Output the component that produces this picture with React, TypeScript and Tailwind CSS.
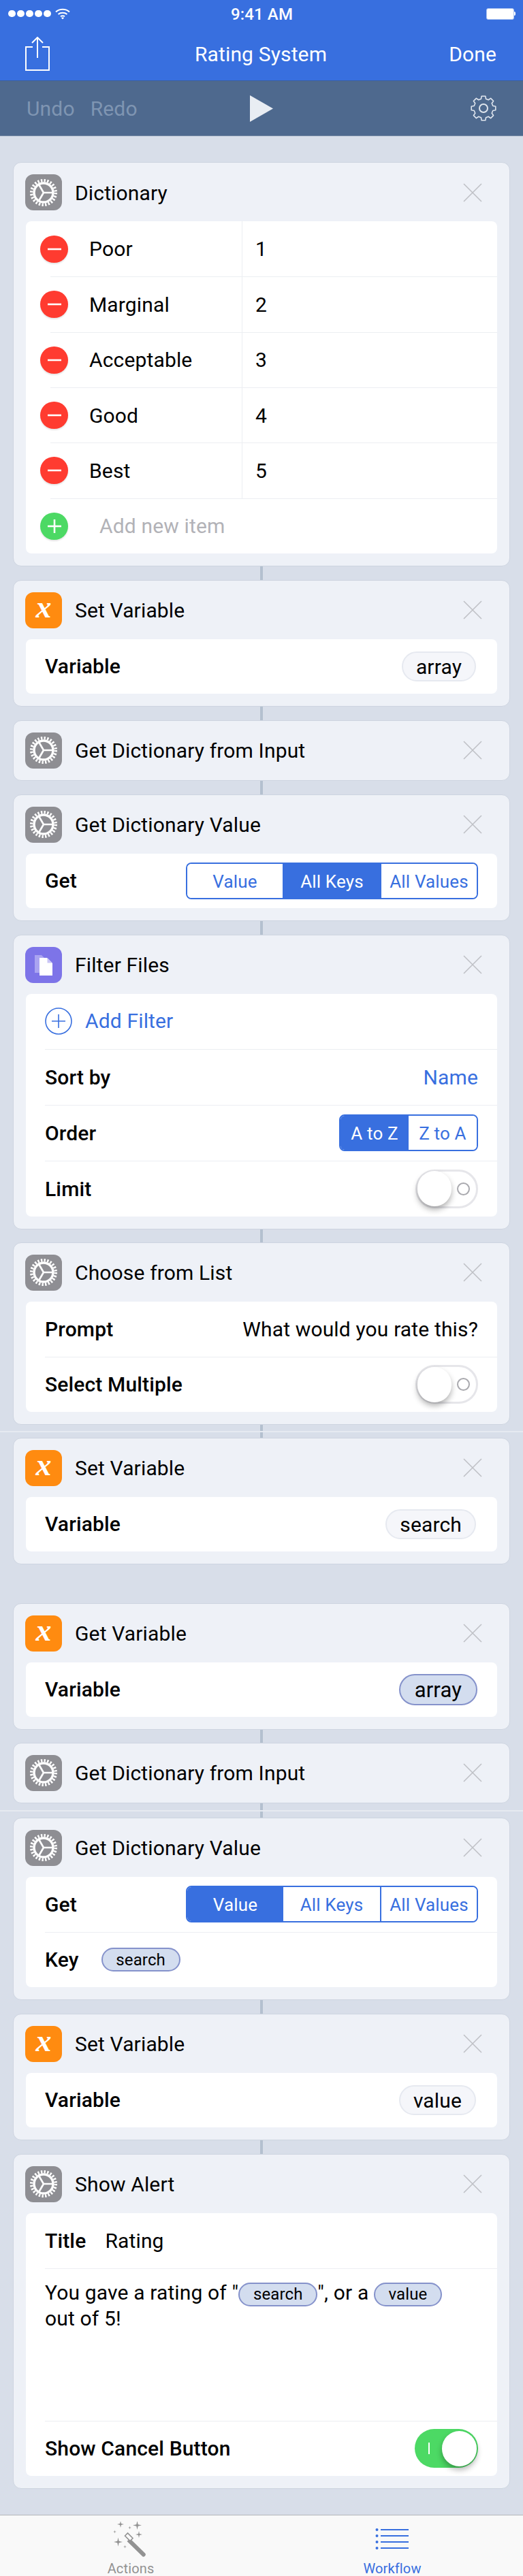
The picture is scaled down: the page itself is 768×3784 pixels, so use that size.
import { ReactNode } from "react";
import clsx from "clsx";

function cogPoints(teeth: number, outer: number, inner: number, c: number) {
  const pts: string[] = [];
  const step = (Math.PI * 2) / teeth;
  for (let i = 0; i < teeth; i++) {
    const a = i * step - Math.PI / 2;
    const at = (r: number, d: number) =>
      `${(c + r * Math.cos(a + d * step)).toFixed(2)},${(c + r * Math.sin(a + d * step)).toFixed(2)}`;
    pts.push(at(inner, -0.32), at(outer, -0.2), at(outer, 0.2), at(inner, 0.32));
  }
  return pts.join(" ");
}

function GearIcon() {
  return (
    <div className="flex h-[53px] w-[54px] shrink-0 items-center justify-center rounded-[12px] bg-[#8e8e93]">
      <svg width="44" height="44" viewBox="0 0 44 44" fill="none" stroke="white">
        <circle cx="22" cy="22" r="17.8" strokeWidth="4.4" strokeDasharray="2.4 2.26" />
        <circle cx="22" cy="22" r="14" strokeWidth="3.4" />
        <path d="M22 22 L36 22 M22 22 L15 10 M22 22 L15 34" strokeWidth="2.6" />
      </svg>
    </div>
  );
}

function VariableIcon() {
  return (
    <div className="flex h-[53px] w-[54px] shrink-0 items-center justify-center rounded-[12px] bg-[#ff8b10] pb-[8px] font-['Liberation_Serif',serif] text-[46px] font-bold italic leading-none text-white">
      x
    </div>
  );
}

function FilesIcon() {
  return (
    <div className="flex h-[53px] w-[54px] shrink-0 items-center justify-center rounded-[12px] bg-[#7d74e8]">
      <svg width="54" height="53" viewBox="0 0 54 53">
        <path d="M14 12 H24 L28 16 V38 H14 Z" fill="#aaa4f1" />
        <path d="M21 16 H32 L40 24 V42 H21 Z" fill="white" />
        <path d="M32.5 16 L40 23.5 H32.5 Z" fill="#c9c5f6" />
      </svg>
    </div>
  );
}

function Card(props: { icon: ReactNode; title: string; children?: ReactNode }) {
  return (
    <div
      className={clsx(
        "rounded-[12px] border border-[#cdd4e0] bg-[#eef1f7] px-[18px] pt-[17px]",
        props.children ? "pb-[18px]" : "pb-[17px]"
      )}
    >
      <div className="-mx-px flex h-[53px] items-center">
        {props.icon}
        <div className="ml-[19px] flex-1 pt-[2px] text-[30px] leading-[36px] text-black">{props.title}</div>
        <svg width="28" height="28" viewBox="0 0 28 28" className="mr-[23px]" stroke="#bfc1c6" strokeWidth="1.6">
          <path d="M1 1 L27 27 M27 1 L1 27" />
        </svg>
      </div>
      {props.children && <div className="mt-[16px] rounded-[8px] bg-white">{props.children}</div>}
    </div>
  );
}

function Row(props: { first?: boolean; className?: string; children: ReactNode }) {
  return (
    <div
      className={clsx(
        "ml-[28px] flex items-center justify-between pr-[28px]",
        !props.first && "border-t border-[#eceef2]",
        props.className ?? "h-[81px]"
      )}
    >
      {props.children}
    </div>
  );
}

function Label(props: { children: ReactNode }) {
  return <div className="pt-[1px] text-[30px] font-medium leading-[36px] text-black">{props.children}</div>;
}

function Pill(props: { children: ReactNode }) {
  return (
    <div className="mr-[3px] flex h-[44px] items-center rounded-full border-2 border-[#e6e9f0] bg-[#f5f6fa] px-[19px] pt-[2px] text-[30px] leading-none text-black">
      {props.children}
    </div>
  );
}

function InlinePill(props: { children: ReactNode; className?: string }) {
  return (
    <span
      className={clsx(
        "inline-flex h-[35px] items-center justify-center rounded-full border-2 border-[#8592cb] bg-[#d3ddef] align-middle text-[24px] leading-none text-black",
        props.className
      )}
    >
      {props.children}
    </span>
  );
}

function Segmented(props: { options: string[]; active: number; grid: string }) {
  return (
    <div
      className={clsx(
        "grid h-[54px] overflow-hidden rounded-[8px] border-2 border-[#386fdf] text-[26px] leading-none",
        props.grid
      )}
    >
      {props.options.map((o, i) => (
        <div
          key={o}
          className={clsx(
            "flex items-center justify-center pt-[2px]",
            i === props.active ? "bg-[#386fdf] text-white" : "bg-white text-[#386fdf]",
            i < props.options.length - 1 && i !== props.active && i + 1 !== props.active && "border-r-2 border-[#386fdf]"
          )}
        >
          {o}
        </div>
      ))}
    </div>
  );
}

function Toggle(props: { on?: boolean }) {
  if (props.on) {
    return (
      <div className="flex h-[57px] w-[93px] items-center justify-between rounded-full bg-[#4cd964] pl-[20px] pr-[2px]">
        <div className="h-[17px] w-[2px] bg-white" />
        <div className="h-[52px] w-[51px] rounded-full bg-white shadow-[0_5px_8px_rgba(0,0,0,0.3)]" />
      </div>
    );
  }
  return (
    <div className="flex h-[57px] w-[92px] items-center justify-between rounded-full border-[3px] border-[#e6e6ea] bg-white pr-[9px]">
      <div className="h-[52px] w-[50px] rounded-full bg-white shadow-[0_5px_8px_rgba(0,0,0,0.3)]" />
      <div className="h-[19px] w-[19px] rounded-full border-2 border-[#a9a9ae]" />
    </div>
  );
}

function Connector(props: { className: string; seam?: string }) {
  return (
    <div className={clsx("relative flex justify-center", props.className)}>
      <div className="h-full w-[4px] bg-[#b4c0cf]" />
      {props.seam && <div className={clsx("absolute left-[-19px] h-[2px] w-[768px] bg-[#e6eaf1]", props.seam)} />}
    </div>
  );
}

function RoundButton(props: { plus?: boolean }) {
  return (
    <div
      className={clsx(
        "flex h-[40px] w-[41px] shrink-0 items-center justify-center rounded-full shadow-[0_2px_2px_rgba(0,0,0,0.1)]",
        props.plus ? "bg-[#4cd964]" : "bg-[#ff3b30]"
      )}
    >
      <svg width="22" height="22" viewBox="0 0 22 22" stroke="white" strokeWidth="2.6">
        <path d="M1 11 H21" />
        {props.plus && <path d="M11 1 V21" />}
      </svg>
    </div>
  );
}

const entries = [
  ["Poor", "1"],
  ["Marginal", "2"],
  ["Acceptable", "3"],
  ["Good", "4"],
  ["Best", "5"],
];

function StatusBar() {
  return (
    <div className="grid h-[40px] grid-cols-[1fr_auto_1fr] items-center pl-[12px] pr-[11px] text-white">
      <div className="flex items-center gap-[2.5px]">
        {[0, 1, 2, 3, 4].map((i) => (
          <div key={i} className="h-[10.5px] w-[10.5px] rounded-full bg-white" />
        ))}
        <svg width="22" height="17" viewBox="0 0 22 17" fill="none" stroke="white" strokeWidth="2" className="ml-[4px]">
          <path d="M1 5.5 C6.5 0.5 15.5 0.5 21 5.5" />
          <path d="M4.5 9 C8 6 14 6 17.5 9" />
          <path d="M8 12.2 C9.5 11 12.5 11 14 12.2" />
          <path d="M9.5 14 L11 16 L12.5 14 Z" fill="white" strokeWidth="1" />
        </svg>
      </div>
      <div className="pt-[2px] text-[24px] font-medium leading-none">9:41 AM</div>
      <div className="flex items-center justify-end">
        <div className="h-[17px] w-[41px] rounded-[3px] border border-[#a9c2f0] bg-white" />
        <div className="h-[6px] w-[2px] rounded-r-sm bg-white" />
      </div>
    </div>
  );
}

function NavBar() {
  return (
    <div className="grid h-[78px] grid-cols-[1fr_auto_1fr] items-center pl-[37px] pr-[39px] text-[30px] leading-none text-white">
      <svg width="36" height="50" viewBox="0 0 36 50" fill="none" stroke="white" strokeWidth="2">
        <path d="M11 15 H1 V49 H35 V15 H25" />
        <path d="M18 31 V1 M10 9 L18 1 L26 9" />
      </svg>
      <div className="pt-[2px]">Rating System</div>
      <div className="pt-[2px] text-right">Done</div>
    </div>
  );
}

function ToolBar() {
  return (
    <div className="grid h-[82px] grid-cols-[1fr_auto_1fr] items-center border-y border-t-[#3c5f9f] border-b-[#7488a3] bg-[#4e698e] pl-[39px] pr-[39px] text-[30px] leading-none text-[#7f95b2]">
      <div className="flex gap-[23px] pt-[2px]">
        <span>Undo</span>
        <span>Redo</span>
      </div>
      <svg width="34" height="39" viewBox="0 0 34 39">
        <path d="M0 0 L34 19.5 L0 39 Z" fill="#e9edf3" />
      </svg>
      <svg width="38" height="38" viewBox="0 0 38 38" fill="none" stroke="#dfe5ee" strokeWidth="1.6" className="justify-self-end">
        <polygon points={cogPoints(8, 18, 14.2, 19)} strokeLinejoin="round" />
        <circle cx="19" cy="19" r="6" strokeWidth="2" />
      </svg>
    </div>
  );
}

function TabBar() {
  const star = (x: number, y: number, r: number) =>
    `M${x} ${y - r} L${x + r * 0.18} ${y - r * 0.18} L${x + r} ${y} L${x + r * 0.18} ${y + r * 0.18} L${x} ${y + r} L${x - r * 0.18} ${y + r * 0.18} L${x - r} ${y} L${x - r * 0.18} ${y - r * 0.18} Z`;
  return (
    <div className="grid h-[91px] grid-cols-2 border-t border-[#b4b6ba] bg-[#f9f9f9] pt-[9px] text-[20px] leading-[24px]">
      <div className="flex flex-col items-center text-[#929292]">
        <svg width="52" height="52" viewBox="0 0 52 52" fill="#929292">
          <path d={star(35.5, 5.5, 6.5)} />
          <path d={star(11, 4, 5)} />
          <path d={star(38, 19, 5)} />
          <path d={star(7.5, 30, 6.5)} />
          <path d={star(24.5, 9, 2.5)} />
          <path d={star(2.5, 15, 2.5)} />
          <path d={star(17.5, 37, 2.5)} />
          <path d="M25 25 L47 46.5 A3 3 0 0 1 42.5 50.5 L20.5 29 Z" />
          <path d="M17.5 21 L21.5 17 L29 24.5 L25 28.5 Z" fill="#f9f9f9" stroke="#929292" strokeWidth="1.6" />
        </svg>
        <div className="mt-[5px]">Actions</div>
      </div>
      <div className="flex flex-col items-center text-[#386fdf]">
        <svg width="52" height="52" viewBox="0 0 52 52" fill="#386fdf">
          <circle cx="3.5" cy="12" r="2" />
          <circle cx="3.5" cy="21" r="2" />
          <circle cx="3.5" cy="30" r="2" />
          <circle cx="3.5" cy="39" r="2" />
          <rect x="9" y="11" width="41" height="2" />
          <rect x="9" y="20" width="41" height="2" />
          <rect x="9" y="29" width="41" height="2" />
          <rect x="9" y="38" width="41" height="2" />
        </svg>
        <div className="mt-[5px]">Workflow</div>
      </div>
    </div>
  );
}

export default function App() {
  return (
    <div className="flex min-h-[3784px] w-[768px] flex-col overflow-hidden bg-[#d8dee9] font-[Roboto,sans-serif] tracking-[0.15px]">
      <div className="bg-[#386fdf]">
        <StatusBar />
        <NavBar />
      </div>
      <ToolBar />

      <div className="flex-1 px-[19px] pb-[38px] pt-[38px]">
        <Card icon={<GearIcon />} title="Dictionary">
          {entries.map(([k, v], i) => (
            <div key={k} className={clsx("ml-[36px] flex h-[81.33px] items-center text-[30px] leading-[36px] text-black", i > 0 && "border-t border-[#eceef2]")}>
              <div className="flex h-full w-[282px] items-center border-r border-[#eceef2]">
                <div className="-ml-[15px]">
                  <RoundButton />
                </div>
                <div className="ml-[31px] pt-[1px]">{k}</div>
              </div>
              <div className="pl-[19px] pt-[1px]">{v}</div>
            </div>
          ))}
          <div className="ml-[36px] flex h-[81.33px] items-center border-t border-[#eceef2] text-[30px] leading-[36px] text-[#b2b2b7]">
            <div className="-ml-[15px]">
              <RoundButton plus />
            </div>
            <div className="ml-[46px] pt-[1px]">Add new item</div>
          </div>
        </Card>
        <Connector className="h-[20px]" />

        <Card icon={<VariableIcon />} title="Set Variable">
          <Row first className="h-[80px]">
            <Label>Variable</Label>
            <Pill>array</Pill>
          </Row>
        </Card>
        <Connector className="h-[20px]" />

        <Card icon={<GearIcon />} title="Get Dictionary from Input" />
        <Connector className="h-[20px]" />

        <Card icon={<GearIcon />} title="Get Dictionary Value">
          <Row first className="h-[80px]">
            <Label>Get</Label>
            <Segmented options={["Value", "All Keys", "All Values"]} active={1} grid="w-[429px] grid-cols-[140px_145px_1fr]" />
          </Row>
        </Card>
        <Connector className="h-[20px]" />

        <Card icon={<FilesIcon />} title="Filter Files">
          <Row first>
            <div className="flex items-center text-[30px] leading-[36px] text-[#386fdf]">
              <svg width="40" height="40" viewBox="0 0 40 40" fill="none" stroke="#386fdf" strokeWidth="1.6">
                <circle cx="20" cy="20" r="19" />
                <path d="M20 10 V30 M10 20 H30" />
              </svg>
              <span className="ml-[19px]">Add Filter</span>
            </div>
          </Row>
          <Row className="h-[82px]">
            <Label>Sort by</Label>
            <div className="pt-[1px] text-[30px] leading-[36px] text-[#386fdf]">Name</div>
          </Row>
          <Row className="h-[82px]">
            <Label>Order</Label>
            <Segmented options={["A to Z", "Z to A"]} active={0} grid="w-[204px] grid-cols-2" />
          </Row>
          <Row className="h-[82px]">
            <Label>Limit</Label>
            <Toggle />
          </Row>
        </Card>
        <Connector className="h-[19px]" />

        <Card icon={<GearIcon />} title="Choose from List">
          <Row first>
            <Label>Prompt</Label>
            <div className="pt-[1px] text-[30px] leading-[36px] text-black">What would you rate this?</div>
          </Row>
          <Row>
            <Label>Select Multiple</Label>
            <Toggle />
          </Row>
        </Card>
        <Connector className="h-[19px]" seam="top-[9px]" />

        <Card icon={<VariableIcon />} title="Set Variable">
          <Row first className="h-[80px]">
            <Label>Variable</Label>
            <Pill>search</Pill>
          </Row>
        </Card>
        <div className="h-[57px]" />

        <Card icon={<VariableIcon />} title="Get Variable">
          <Row first className="h-[80px]">
            <Label>Variable</Label>
            <div className="mr-px flex h-[46px] items-center rounded-full border-2 border-[#8592cb] bg-[#d3ddef] px-[21px] pt-[2px] text-[31px] leading-none text-black">
              array
            </div>
          </Row>
        </Card>
        <Connector className="h-[19px]" />

        <Card icon={<GearIcon />} title="Get Dictionary from Input" />
        <Connector className="h-[21px]" seam="top-[10px]" />

        <Card icon={<GearIcon />} title="Get Dictionary Value">
          <Row first>
            <Label>Get</Label>
            <Segmented options={["Value", "All Keys", "All Values"]} active={0} grid="w-[429px] grid-cols-[141px_144px_1fr]" />
          </Row>
          <Row>
            <div className="flex items-center gap-[33px]">
              <Label>Key</Label>
              <InlinePill className="w-[116px]">search</InlinePill>
            </div>
          </Row>
        </Card>
        <Connector className="h-[20px]" />

        <Card icon={<VariableIcon />} title="Set Variable">
          <Row first className="h-[80px]">
            <Label>Variable</Label>
            <Pill>value</Pill>
          </Row>
        </Card>
        <Connector className="h-[20px]" />

        <Card icon={<GearIcon />} title="Show Alert">
          <Row first>
            <div className="flex items-center gap-[28px]">
              <Label>Title</Label>
              <div className="pt-[1px] text-[30px] leading-[36px] text-black">Rating</div>
            </div>
          </Row>
          <div className="ml-[28px] h-[224px] border-t border-[#eceef2] pr-[28px] pt-[17px] text-[30px] leading-[36px] text-black">
            You gave a rating of "<InlinePill className="w-[116px]">search</InlinePill>", or a{" "}
            <InlinePill className="w-[100px]">value</InlinePill>
            <br />
            out of 5!
          </div>
          <Row>
            <Label>Show Cancel Button</Label>
            <Toggle on />
          </Row>
        </Card>
      </div>

      <TabBar />
    </div>
  );
}
